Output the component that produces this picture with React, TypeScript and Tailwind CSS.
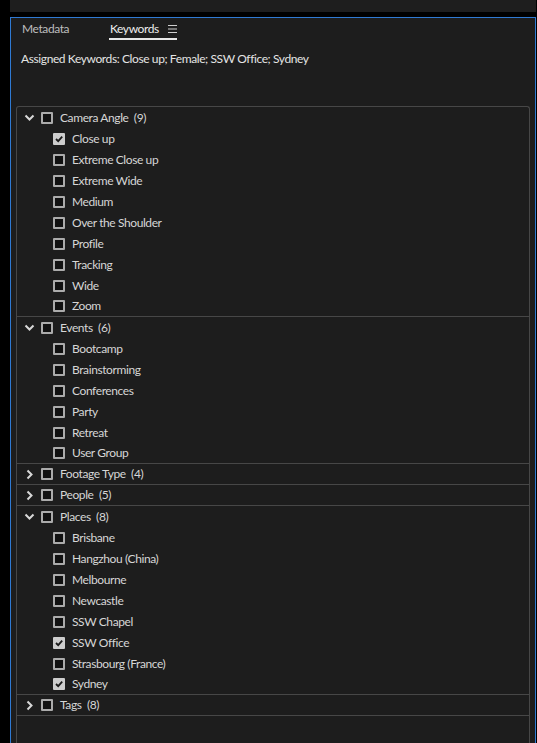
import React from "react";

type Group = { name: string; count: number; open: boolean; items: { name: string; checked?: boolean }[] };

const groups: Group[] = [
  {
    name: "Camera Angle",
    count: 9,
    open: true,
    items: [
      { name: "Close up", checked: true },
      { name: "Extreme Close up" },
      { name: "Extreme Wide" },
      { name: "Medium" },
      { name: "Over the Shoulder" },
      { name: "Profile" },
      { name: "Tracking" },
      { name: "Wide" },
      { name: "Zoom" },
    ],
  },
  {
    name: "Events",
    count: 6,
    open: true,
    items: [
      { name: "Bootcamp" },
      { name: "Brainstorming" },
      { name: "Conferences" },
      { name: "Party" },
      { name: "Retreat" },
      { name: "User Group" },
    ],
  },
  { name: "Footage Type", count: 4, open: false, items: [] },
  { name: "People", count: 5, open: false, items: [] },
  {
    name: "Places",
    count: 8,
    open: true,
    items: [
      { name: "Brisbane" },
      { name: "Hangzhou (China)" },
      { name: "Melbourne" },
      { name: "Newcastle" },
      { name: "SSW Chapel" },
      { name: "SSW Office", checked: true },
      { name: "Strasbourg (France)" },
      { name: "Sydney", checked: true },
    ],
  },
  { name: "Tags", count: 8, open: false, items: [] },
];

function Check({ checked }: { checked?: boolean }) {
  if (checked) {
    return (
      <div className="w-[12px] h-[12px] rounded-[1px] bg-[#cdcdcd] flex items-center justify-center shrink-0">
        <svg width="10" height="10" viewBox="0 0 10 10">
          <path d="M2 5 L4.2 7.2 L8.2 2.6" fill="none" stroke="#1a1a1a" strokeWidth="1.8" />
        </svg>
      </div>
    );
  }
  return <div className="w-[12px] h-[12px] rounded-[1px] border-2 border-[#ababab] bg-[#111111] shrink-0" />;
}

function Chevron({ open }: { open: boolean }) {
  return open ? (
    <svg width="11" height="11" viewBox="0 0 11 11" className="shrink-0">
      <path d="M1.5 3.5 L5.5 7.5 L9.5 3.5" fill="none" stroke="#d8d8d8" strokeWidth="2" />
    </svg>
  ) : (
    <svg width="11" height="11" viewBox="0 0 11 11" className="shrink-0">
      <path d="M3.5 1.5 L7.5 5.5 L3.5 9.5" fill="none" stroke="#d8d8d8" strokeWidth="2" />
    </svg>
  );
}

export default function App() {
  return (
    <div
      className="w-[537px] h-[743px] bg-black flex flex-col overflow-hidden text-[12px] tracking-[-0.4px] text-[#d6d6d6]"
      style={{ fontFamily: "Lato, 'Open Sans', sans-serif" }}
    >
      <div className="ml-[10px] mr-[1px] h-[12px] bg-[#1e1e1e] shrink-0" />
      <div className="h-[5px] shrink-0" />
      <div className="ml-[10px] w-[526px] flex-1 border border-b-0 border-[#2f7ad3] bg-[#1d1d1d] flex flex-col">
        <div className="flex items-end h-[22px] pl-[11px] shrink-0">
          <div className="w-[87px] text-[#bdbdbd] h-[22px] leading-[22px]">Metadata</div>
          <div className="w-[68px] flex items-start border-b-2 border-[#e8e8e8] h-[22px] pl-[1px]">
            <span className="text-[#ededed] leading-[21px]">Keywords</span>
            <svg width="9" height="8" viewBox="0 0 9 8" className="ml-[9px] mt-[7px]">
              <path d="M0 0.5 H9 M0 4 H9 M0 7.5 H9" stroke="#cfcfcf" strokeWidth="1" />
            </svg>
          </div>
        </div>
        <div className="pl-[10px] mt-[11px] h-[16px] leading-[16px] text-[#e4e4e4] shrink-0">
          Assigned Keywords: Close up; Female; SSW Office; Sydney
        </div>
        <div className="mx-[5px] mt-[39px] flex-1 border border-b-0 border-[#474747] rounded-t-[3px] flex flex-col">
          {groups.map((g) => (
            <div key={g.name} className="border-b border-[#474747]">
              <div className={"flex items-center pl-[7px] " + (g.open ? "h-[21px]" : "h-[20px]")}>
                <Chevron open={g.open} />
                <div className="ml-[6px]">
                  <Check />
                </div>
                <span className="ml-[7px]">
                  {g.name}&nbsp;&nbsp;({g.count})
                </span>
              </div>
              {g.items.map((it, i) => (
                <div
                  key={it.name}
                  className={"flex items-center pl-[36px] " + (i === g.items.length - 1 ? "h-[20px]" : "h-[21px]")}
                >
                  <Check checked={it.checked} />
                  <span className="ml-[7px]">{it.name}</span>
                </div>
              ))}
            </div>
          ))}
        </div>
      </div>
    </div>
  );
}
